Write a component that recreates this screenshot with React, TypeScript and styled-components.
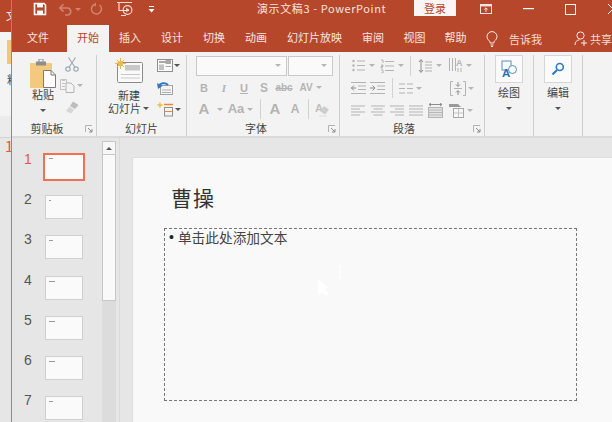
import React from 'react';
import styled, { createGlobalStyle } from 'styled-components';

const RED = '#b7472a';
const GRAY = '#b3b3b3';
const CJK = '"Noto Sans CJK SC", "Liberation Sans", sans-serif';

const Global = createGlobalStyle`
  html, body { margin: 0; padding: 0; width: 612px; height: 422px; overflow: hidden; }
  body { font-family: ${CJK}; background: #e6e6e6; }
`;

const Screen = styled.div`
  display: flex;
  width: 612px;
  height: 422px;
  overflow: hidden;
`;

/* the other window peeking out on the left */
const BackWindow = styled.div`
  flex: 0 0 11px;
  display: flex;
  flex-direction: column;
  overflow: hidden;
  border-right: 1px solid #8c8c8c;
  box-sizing: content-box;
`;
const BackTitle = styled.div`
  flex: 0 0 32px;
  background: ${RED};
  color: #fff;
  font-size: 11px;
  line-height: 30px;
  padding-left: 6px;
  white-space: nowrap;
`;
const BackRibbon = styled.div`
  flex: 0 0 84px;
  background: #f4f4f4;
  padding: 8px 0 0 7px;
  box-sizing: border-box;
  font-size: 11px;
  color: #444;
  white-space: nowrap;
`;
const BackPaste = styled.div`
  width: 10px;
  height: 24px;
  background: #f0c77c;
  margin-bottom: 7px;
`;
const BackThumbs = styled.div`
  flex: 0 0 22px;
  box-sizing: border-box;
  background: #ebebeb;
  border-bottom: 1px solid #d4d4d4;
`;
const BackBody = styled.div`
  flex: 1;
  background: #e6e6e6;
  color: #e8583c;
  font-size: 15px;
  line-height: 16px;
  padding-left: 5px;
`;

const Main = styled.div`
  flex: 1;
  min-width: 0;
  display: flex;
  flex-direction: column;
`;

const TitleBar = styled.div`
  flex: 0 0 25px;
  display: flex;
  align-items: flex-start;
  background: ${RED};
  color: #fff;
  overflow: hidden;
`;
const QatSlot = styled.span<{ $left: number; $w: number }>`
  flex: none;
  width: ${p => p.$w}px;
  margin-left: ${p => p.$left}px;
  height: 16px;
  margin-top: 1px;
  display: flex;
  align-items: center;
  justify-content: center;
`;
const DocTitle = styled.div`
  flex: none;
  margin-left: 102px;
  width: 130px;
  font-size: 11px;
  line-height: 16px;
  letter-spacing: 0.6px;
  white-space: nowrap;
  color: #f6e4de;
`;
const Login = styled.div`
  flex: none;
  margin-left: 27px;
  width: 42px;
  height: 16px;
  background: #fbf6f4;
  color: ${RED};
  font-size: 11px;
  line-height: 16px;
  text-align: center;
`;

const TabRow = styled.div`
  flex: 0 0 27px;
  display: flex;
  align-items: stretch;
  padding-left: 5px;
  background: ${RED};
`;
const Tab = styled.div<{ $w?: number; $active?: boolean }>`
  width: ${p => p.$w ?? 42}px;
  flex: none;
  margin-left: ${p => (p.$active ? 8 : 0)}px;
  text-align: center;
  font-size: 11px;
  line-height: 25px;
  color: ${p => (p.$active ? RED : '#f8e6e0')};
  background: ${p => (p.$active ? '#f3f3f3' : 'transparent')};
`;
const TellSlot = styled.div<{ $left: number; $gap: number }>`
  flex: none;
  margin-left: ${p => p.$left}px;
  display: flex;
  align-items: center;
  gap: ${p => p.$gap}px;
  font-size: 11px;
  color: #f3dcd5;
  white-space: nowrap;
`;

const Ribbon = styled.div`
  flex: 0 0 86px;
  min-height: 0;
  height: 86px;
  display: flex;
  background: #f3f3f3;
  border-bottom: 2px solid #dadada;
  box-sizing: border-box;
`;
const Group = styled.div<{ $w: number }>`
  flex: 0 0 ${p => p.$w}px;
  display: flex;
  flex-direction: column;
  position: relative;
  box-sizing: border-box;
  margin-top: 3px;
  border-right: 1px solid #cfcfcf;
`;
const GroupBody = styled.div`
  flex: 1;
  min-height: 0;
  display: flex;
`;
const GroupLabel = styled.div<{ $pull?: number }>`
  flex: 0 0 16px;
  padding-right: ${p => p.$pull ?? 0}px;
  font-size: 11px;
  line-height: 16px;
  text-align: center;
  color: #444;
`;
const Launcher = styled.svg`
  position: absolute;
  right: 3px;
  bottom: 3px;
`;
const Column = styled.div<{ $w: number; $left?: number; $top?: number; $gap?: number; $start?: boolean }>`
  width: ${p => p.$w}px;
  margin-left: ${p => p.$left ?? 0}px;
  padding-top: ${p => p.$top ?? 0}px;
  display: flex;
  flex-direction: column;
  align-items: ${p => (p.$start ? 'flex-start' : 'center')};
  gap: ${p => p.$gap ?? 0}px;
  font-size: 11px;
  line-height: 13px;
  color: #444;
`;
const ColLabel = styled.span<{ $top?: number }>`
  margin-top: ${p => p.$top ?? 0}px;
`;
const CaretLine = styled.span<{ $top?: number }>`
  margin-top: ${p => p.$top ?? 0}px;
  line-height: 6px;
`;
const IconRow = styled.div<{ $h?: number; $left?: number }>`
  height: ${p => p.$h ?? 22}px;
  padding-left: ${p => p.$left ?? 0}px;
  display: flex;
  align-items: center;
  white-space: nowrap;
`;
const Slot = styled.span<{ $w: number; $left?: number }>`
  flex: none;
  width: ${p => p.$w}px;
  margin-left: ${p => p.$left ?? 0}px;
  display: flex;
  align-items: center;
  justify-content: center;
`;
const Glyph = styled.span<{ $size?: number; $serif?: boolean; $italic?: boolean; $under?: boolean }>`
  font-family: ${p => (p.$serif ? '"Liberation Serif", serif' : '"Liberation Sans", sans-serif')};
  font-size: ${p => p.$size ?? 12}px;
  font-weight: 700;
  font-style: ${p => (p.$italic ? 'italic' : 'normal')};
  text-decoration: ${p => (p.$under ? 'underline' : 'none')};
  color: ${GRAY};
  line-height: 14px;
`;
const Caret = styled.span<{ $dark?: boolean; $color?: string; $up?: boolean }>`
  display: inline-block;
  flex: none;
  width: 0;
  height: 0;
  border-left: 3px solid transparent;
  border-right: 3px solid transparent;
  border-top: 3px solid ${p => p.$color ?? (p.$dark ? '#555' : '#b5b5b5')};
  transform: ${p => (p.$up ? 'rotate(180deg)' : 'none')};
`;
const VRule = styled.span<{ $left: number; $h?: number }>`
  flex: none;
  width: 1px;
  height: ${p => p.$h ?? 20}px;
  margin-left: ${p => p.$left}px;
  background: #d2d2d2;
`;
const Combo = styled.div<{ $w: number }>`
  flex: none;
  box-sizing: border-box;
  width: ${p => p.$w}px;
  height: 20px;
  margin-right: 1px;
  background: #fafafa;
  border: 1px solid #c9c9c9;
  display: flex;
  align-items: center;
  justify-content: flex-end;
  padding-right: 5px;
`;
const BigButton = styled.div`
  box-sizing: border-box;
  width: 28px;
  height: 28px;
  background: #fbfbfb;
  border: 1px solid #d6d6d6;
  display: flex;
  align-items: center;
  justify-content: center;
`;

const Body = styled.div`
  flex: 1;
  min-height: 0;
  display: flex;
  background: #e6e6e6;
`;
const ThumbPane = styled.div`
  flex: 0 0 90px;
  display: flex;
  flex-direction: column;
  padding-top: 15px;
  box-sizing: border-box;
`;
const ThumbRow = styled.div`
  flex: 0 0 40.2px;
  display: flex;
  align-items: flex-start;
`;
const ThumbNo = styled.div<{ $active?: boolean }>`
  width: 33px;
  text-align: left;
  padding-left: 12px;
  box-sizing: border-box;
  font-family: "Liberation Sans", sans-serif;
  font-size: 14px;
  line-height: 14px;
  margin-top: -1px;
  color: ${p => (p.$active ? '#e8583c' : '#555')};
`;
const Thumb = styled.div<{ $active?: boolean }>`
  box-sizing: border-box;
  width: ${p => (p.$active ? 42 : 38)}px;
  height: ${p => (p.$active ? 28 : 24)}px;
  margin: ${p => (p.$active ? '0 0 0 -2px' : '2px 0 0 0')};
  background: #fafafa;
  border: ${p => (p.$active ? '2px solid #f0704f' : '1px solid #cfcfcf')};
  padding: ${p => (p.$active ? '3px 0 0 4px' : '4px 0 0 3px')};
  display: flex;
  align-items: flex-start;
`;
const ThumbMark = styled.span<{ $w: number }>`
  width: ${p => p.$w}px;
  height: 1px;
  background: #9c9c9c;
`;
const ScrollBar = styled.div`
  flex: 0 0 14px;
  display: flex;
  flex-direction: column;
  margin-top: 3px;
  background: #dcdcdc;
`;
const ScrollUp = styled.div`
  flex: 0 0 14px;
  box-sizing: border-box;
  background: #f7f7f7;
  border: 1px solid #c6c6c6;
  display: flex;
  align-items: center;
  justify-content: center;
`;
const ScrollThumb = styled.div`
  flex: 0 0 146px;
  box-sizing: border-box;
  background: #f9f9f9;
  border: 1px solid #c6c6c6;
  border-top-width: 0;
`;
const Splitter = styled.div`
  flex: 0 0 4px;
  border-right: 1px solid #dadada;
  box-sizing: border-box;
`;
const Stage = styled.div`
  flex: 1;
  min-width: 0;
  padding: 19px 0 0 12px;
  display: flex;
`;
const Slide = styled.div`
  flex: 1;
  background: #f9f9f9;
  border-left: 1px solid #dedede;
  border-top: 1px solid #dedede;
  padding: 24px 35px 0 31px;
  display: flex;
  flex-direction: column;
`;
const SlideTitle = styled.div`
  padding-left: 7px;
  height: 46px;
  font-size: 21px;
  line-height: 30px;
  letter-spacing: 1px;
  color: #333;
`;
const Placeholder = styled.div`
  position: relative;
  box-sizing: border-box;
  height: 173px;
  border: 1px dashed #777;
  padding: 0 0 0 4px;
  display: flex;
  align-items: flex-start;
  gap: 4px;
  font-size: 13.7px;
  line-height: 16px;
  color: #444;
`;
const BulletMark = styled.span`
  font-family: "Liberation Sans", sans-serif;
  font-size: 14px;
  color: #222;
`;
const Cursor = styled.svg`
  position: absolute;
  left: 150px;
  top: 29px;
`;

/* ---- drawn icons ---- */
const Svg = ({ w, h, children }: { w: number; h: number; children: React.ReactNode }) => (
  <svg width={w} height={h} viewBox={`0 0 ${w} ${h}`} fill="none">{children}</svg>
);

const Lines = ({ rows, x = 0, w = 14, gap = 3, c = GRAY }: { rows: number; x?: number; w?: number; gap?: number; c?: string }) => (
  <>
    {Array.from({ length: rows }).map((_, i) => (
      <rect key={i} x={x} y={1 + i * gap} width={w} height="1" fill={c} />
    ))}
  </>
);

const SaveIcon = () => (
  <Svg w={14} h={14}>
    <path d="M1.500 1.500h9.500l1.500 1.500v9.500h-11z" stroke="#fff" strokeWidth="1.6" />
    <rect x="4" y="2" width="6" height="3.4" fill="#fff" />
    <rect x="4" y="8.500" width="6" height="3.500" fill="#fff" />
  </Svg>
);
const UndoIcon = () => (
  <Svg w={15} h={14}>
    <path d="M2 6h8a3.600 3.600 0 0 1 0 7H7M5.500 2.200 1.800 6l3.700 3.600" stroke="#cf8470" strokeWidth="1.6" />
  </Svg>
);
const RedoIcon = () => (
  <Svg w={13} h={14}>
    <path d="M9.500 3A5 5 0 1 1 4 2.600" stroke="#cf8470" strokeWidth="1.5" />
    <path d="M6 .5 3 2.800l3 1.600z" fill="#cf8470" />
  </Svg>
);
const PresentIcon = () => (
  <Svg w={17} h={16}>
    <path d="M0 1.500h15M2 1.500v8h10" stroke="#f4dcd5" strokeWidth="1.2" />
    <circle cx="10.500" cy="9" r="4.400" stroke="#f4dcd5" strokeWidth="1.1" />
    <path d="M9.200 6.800v4.400l3.200-2.200z" fill="#f4dcd5" />
    <path d="M4 14.500h5" stroke="#f4dcd5" />
  </Svg>
);
const QatMore = () => (
  <Svg w={7} h={8}>
    <rect x="1" y="1" width="5" height="1" fill="#fff" />
    <path d="M.5 4h6L3.500 7.500z" fill="#fff" />
  </Svg>
);
const WinBox = () => (
  <Svg w={12} h={10}>
    <rect x=".5" y=".5" width="11" height="9" stroke="#f6e4de" />
    <rect x="0" y="0" width="12" height="2.400" fill="#f6e4de" />
    <path d="M6 8V4M4.200 5.600 6 3.800l1.800 1.800" stroke="#f6e4de" />
  </Svg>
);
const Bulb = () => (
  <Svg w={12} h={16}>
    <path d="M3.600 10.200C2.400 9 1 7.800 1 5.600a5 5 0 0 1 10 0c0 2.200-1.400 3.400-2.600 4.600-.4.600-.5 1.200-.5 1.800H4.100c0-.6-.1-1.200-.5-1.800z" stroke="#fbeee9" />
    <path d="M4.500 14h3M5 15.500h2" stroke="#fbeee9" />
  </Svg>
);
const UserPlus = () => (
  <Svg w={14} h={15}>
    <circle cx="6.500" cy="4.500" r="3.600" stroke="#fbeee9" />
    <path d="M1 14c0-3 1.800-5 4.500-5.200" stroke="#fbeee9" />
    <path d="M7 12h6M10 9v6" stroke="#fbeee9" />
  </Svg>
);
const PasteIcon = () => (
  <Svg w={27} h={30}>
    <rect x="0" y="4" width="22" height="25" rx="1" fill="#f2c97f" />
    <rect x="6" y="2.500" width="10" height="4" fill="#8d8d8d" />
    <rect x="9" y="0" width="4" height="4" fill="none" stroke="#8d8d8d" />
    <path d="M13.500 11.500h7.500l4.500 4.500v12.500h-12z" fill="#fff" stroke="#7b7b7b" />
    <path d="M21 11.500v4.500h4.500" stroke="#7b7b7b" />
  </Svg>
);
const Scissors = () => (
  <Svg w={14} h={15}>
    <circle cx="3" cy="12" r="2.200" stroke="#9fabb3" strokeWidth="1.2" />
    <circle cx="11" cy="12" r="2.200" stroke="#9fabb3" strokeWidth="1.2" />
    <path d="M4.200 10 10.500.5M9.800 10 3.500.5" stroke="#9fabb3" strokeWidth="1.2" />
  </Svg>
);
const CopyIcon = () => (
  <Svg w={15} h={14}>
    <path d="M.5.5h6v10h-6z" stroke="#c4c4c4" />
    <path d="M6 4h5l3 3v6.500H6z" fill="#f3f3f3" stroke="#b3b3b3" />
    <Lines rows={3} x={2} w={3} c="#c4c4c4" />
  </Svg>
);
const Painter = () => (
  <Svg w={15} h={14}>
    <path d="M8 1.500 13.500 5 10 9 5 6z" fill="#bdbdbd" />
    <path d="M4.500 6.500 9 10l-3 3.500-5-2.500z" fill="#d6d6d6" />
  </Svg>
);
const NewSlideIcon = () => (
  <Svg w={29} h={25}>
    <rect x="2.500" y="4.500" width="25" height="20" rx="1" fill="#fafafa" stroke="#8a8a8a" />
    <rect x="10" y="7" width="15" height="5.500" fill="#c8c8c8" />
    <path d="M6 16.500h19M6 20h19" stroke="#c8c8c8" />
    <circle cx="5.500" cy="5.500" r="2.600" fill="#f0b94f" />
    <path d="M5.500 0v11M0 5.500h11M1.800 1.800l7.400 7.400M9.200 1.800 1.800 9.200" stroke="#f0b94f" />
  </Svg>
);
const LayoutIcon = () => (
  <Svg w={16} h={13}>
    <rect x=".5" y=".5" width="15" height="12" fill="#fafafa" stroke="#8f8f8f" />
    <rect x="2" y="2" width="12" height="2" fill="#a8a8a8" />
    <rect x="2" y="5.500" width="5" height="5.500" fill="#c2c2c2" />
    <Lines rows={3} x={8.500} w={5.500} c="#a8a8a8" />
  </Svg>
);
const ResetIcon = () => (
  <Svg w={16} h={14}>
    <rect x="3.500" y="4.500" width="12" height="9" fill="#f4f4f4" stroke="#a3a3a3" />
    <path d="M5 9h9M5 11.500h9" stroke="#b0b0b0" />
    <path d="M1.500 5.500C3 2 8 1 11 4" stroke="#2f78c4" strokeWidth="2" />
    <path d="M0 2l1 6 4.500-3z" fill="#2f78c4" />
  </Svg>
);
const SectionIcon = () => (
  <Svg w={17} h={15}>
    <circle cx="3" cy="3" r="1.500" fill="#f0b94f" />
    <path d="M3 0v6M0 3h6" stroke="#f0b94f" />
    <path d="M7 2.500h9" stroke="#e8863a" strokeWidth="1.5" />
    <rect x="7.500" y="5.500" width="8" height="8.500" stroke="#8f8f8f" />
    <path d="M7.500 9.500h8" stroke="#e8863a" />
  </Svg>
);
const Launch = () => (
  <Launcher width="8" height="8" viewBox="0 0 8 8" fill="none">
    <path d="M.5 7V.5H7" stroke="#b4b4b4" />
    <path d="M3 3l4 4M7 4v3H4" stroke="#8c8c8c" />
  </Launcher>
);
const Bullets = () => (
  <Svg w={13} h={13}>
    <path d="M5 2h8M5 6.500h8M5 11h8" stroke={GRAY} />
    <circle cx="1.500" cy="2" r="1.200" fill={GRAY} />
    <circle cx="1.500" cy="6.500" r="1.200" fill={GRAY} />
    <circle cx="1.500" cy="11" r="1.200" fill={GRAY} />
  </Svg>
);
const Numbers = () => (
  <Svg w={14} h={14}>
    <path d="M5 2.500h9M5 7h9M5 11.500h9" stroke={GRAY} />
    <path d="M1 1h2v3M1 6h2v1.500H1V9h2M1 11h2v3H1" stroke="#9a9a9a" strokeWidth=".7" />
  </Svg>
);
const LineSpace = () => (
  <Svg w={14} h={16}>
    <path d="M3 2v12M1 4l2-2.500L5 4M1 12l2 2.500L5 12" stroke="#8c8c8c" />
    <path d="M7 4h7M7 7h7M7 10h7M7 13h7" stroke={GRAY} />
  </Svg>
);
const TextDir = () => (
  <Svg w={15} h={15}>
    <path d="M1.500 0v13M4.500 0v13M7.500 0v13" stroke={GRAY} />
    <text x="8" y="8" fontSize="9" fontWeight="700" fill={GRAY} fontFamily="Liberation Sans">A</text>
    <path d="M10 10v4M13 10v4" stroke={GRAY} />
  </Svg>
);
const Indent = ({ rev }: { rev?: boolean }) => (
  <Svg w={15} h={12}>
    <path d="M0 .5h15M7 4h8M7 7.500h8M0 11.500h15" stroke={GRAY} />
    <path d={rev ? 'M0 6h5M3 3.500 .5 6 3 8.500' : 'M0 6h5M2.500 3.500 5 6 2.500 8.500'} stroke="#8c8c8c" />
  </Svg>
);
const Cols = () => (
  <Svg w={14} h={11}>
    <path d="M0 1h6M8 1h6M0 5.500h6M8 5.500h6M0 10h6M8 10h6" stroke={GRAY} />
  </Svg>
);
const AlignBox = () => (
  <Svg w={16} h={15}>
    <path d="M3 .5H.5v14H3M13 .5h2.500v14H13" stroke={GRAY} />
    <path d="M4 7.500h8" stroke={GRAY} />
    <path d="M8 1v4M6 3.500 8 5.500l2-2M8 14v-4M6 11.500l2-2 2 2" stroke="#8c8c8c" />
  </Svg>
);
const Align = ({ kind }: { kind: 'l' | 'c' | 'r' | 'j' }) => {
  const x = kind === 'c' ? 2.5 : kind === 'r' ? 5 : 0;
  const w = kind === 'j' ? 14 : 9;
  return (
    <Svg w={14} h={11}>
      <path d={`M0 1h14M${x} 4h${w}M0 7h14M${x} 10h${w}`} stroke={GRAY} />
    </Svg>
  );
};
const Justify = () => (
  <Svg w={15} h={15}>
    <rect x=".5" y="4.500" width="14" height="10" fill="#e2e2e2" stroke={GRAY} />
    <path d="M1 7h13M1 9.500h13M1 12h13" stroke="#b8b8b8" />
    <path d="M1 1.500h13M1 1.500 3 0M1 1.500 3 3M14 1.500 12 0M14 1.500 12 3" stroke="#8c8c8c" />
  </Svg>
);
const SmartArt = () => (
  <Svg w={15} h={15}>
    <path d="M0 1h9l3 3H0z" fill="#9a9a9a" />
    <rect x="4.500" y="5.500" width="10" height="9" fill="#f7f7f7" stroke="#a8a8a8" />
    <path d="M9.500 6v8M5 10h9" stroke="#c2c2c2" />
  </Svg>
);
const Eraser = () => (
  <Svg w={15} h={15}>
    <text x="0" y="10" fontSize="11" fontWeight="700" fill="#c0c0c0" fontFamily="Liberation Sans">A</text>
    <path d="M9 4l5 3.500-4 5L5 9z" fill="#cdcdcd" />
    <path d="M4 14h8" stroke="#dcdcdc" />
  </Svg>
);
const ShapesIcon = () => (
  <Svg w={18} h={18}>
    <rect x="2" y="1" width="9" height="9" stroke="#5b8fc4" />
    <circle cx="12.500" cy="9.500" r="4" fill="#fbfbfb" stroke="#5b8fc4" />
    <text x="2" y="17" fontSize="11.5" fontWeight="700" fill="#2f6db0" fontFamily="Liberation Sans">A</text>
  </Svg>
);
const SearchIcon = () => (
  <Svg w={14} h={14}>
    <circle cx="8.800" cy="5" r="3.500" stroke="#2f78c4" strokeWidth="1.6" />
    <path d="M6 8 1.500 12.500" stroke="#2f78c4" strokeWidth="2.2" />
  </Svg>
);

const tabs: [string, number?][] = [
  ['插入'], ['设计'], ['切换'], ['动画'], ['幻灯片放映', 75], ['审阅'], ['视图', 41], ['帮助', 41],
];
const slides = [
  { n: 1, mark: 4 }, { n: 2, mark: 2 }, { n: 3, mark: 4 }, { n: 4, mark: 6 },
  { n: 5, mark: 6 }, { n: 6, mark: 6 }, { n: 7, mark: 4 },
];

export default function App() {
  return (
    <Screen>
      <Global />
      <BackWindow>
        <BackTitle>文件</BackTitle>
        <BackRibbon>
          <BackPaste />
          粘贴
        </BackRibbon>
        <BackThumbs />
        <BackBody>1</BackBody>
      </BackWindow>
      <Main>
        <TitleBar>
          <QatSlot $left={21} $w={14}><SaveIcon /></QatSlot>
          <QatSlot $left={11} $w={15}><UndoIcon /></QatSlot>
          <QatSlot $left={2} $w={6}><Caret $color="#cf8470" /></QatSlot>
          <QatSlot $left={9} $w={13}><RedoIcon /></QatSlot>
          <QatSlot $left={14} $w={17}><PresentIcon /></QatSlot>
          <QatSlot $left={14} $w={7}><QatMore /></QatSlot>
          <DocTitle>演示文稿3 - PowerPoint</DocTitle>
          <Login>登录</Login>
          <QatSlot $left={24} $w={12}><WinBox /></QatSlot>
          <QatSlot $left={31} $w={11}>
            <Svg w={11} h={2}><rect width="11" height="1.2" fill="#fff" /></Svg>
          </QatSlot>
          <QatSlot $left={31} $w={11}>
            <Svg w={11} h={11}><rect x=".5" y=".5" width="10" height="10" stroke="#fff" /></Svg>
          </QatSlot>
          <QatSlot $left={32} $w={10}>
            <Svg w={10} h={10}><path d="M0 0l10 10M10 0 0 10" stroke="#fff" /></Svg>
          </QatSlot>
        </TitleBar>
        <TabRow>
          <Tab>文件</Tab>
          <Tab $active>开始</Tab>
          {tabs.map(([label, w]) => (
            <Tab key={label} $w={w}>{label}</Tab>
          ))}
          <TellSlot $left={10} $gap={11}>
            <Bulb />
            <span>告诉我</span>
          </TellSlot>
          <TellSlot $left={32} $gap={2}>
            <UserPlus />
            <span>共享</span>
          </TellSlot>
        </TabRow>
        <Ribbon>
          <Group $w={85}>
            <GroupBody>
              <Column $w={36} $left={13} $top={4}>
                <PasteIcon />
                <ColLabel $top={-1}>粘贴</ColLabel>
                <CaretLine $top={3}><Caret $dark /></CaretLine>
              </Column>
              <Column $w={22} $top={2} $gap={6}>
                <IconRow $h={15}><Scissors /></IconRow>
                <IconRow $h={15}><CopyIcon /><Slot $w={10}><Caret /></Slot></IconRow>
                <IconRow $h={15}><Painter /></IconRow>
              </Column>
            </GroupBody>
            <GroupLabel $pull={14}>剪贴板</GroupLabel>
            <Launch />
          </Group>
          <Group $w={90}>
            <GroupBody>
              <Column $w={50} $left={7} $top={3}>
                <NewSlideIcon />
                <ColLabel $top={6}>新建</ColLabel>
                <IconRow $h={13}>幻灯片<Slot $w={9}><Caret $dark /></Slot></IconRow>
              </Column>
              <Column $w={26} $left={2} $top={3} $gap={7}>
                <IconRow $h={15}><LayoutIcon /><Slot $w={9}><Caret $dark /></Slot></IconRow>
                <IconRow $h={15}><ResetIcon /><Slot $w={9} /></IconRow>
                <IconRow $h={15}><SectionIcon /><Slot $w={8}><Caret $dark /></Slot></IconRow>
              </Column>
            </GroupBody>
            <GroupLabel>幻灯片</GroupLabel>
          </Group>
          <Group $w={153}>
            <GroupBody>
              <Column $w={150} $start>
                <IconRow $h={22} $left={9}>
                  <Combo $w={91}><Caret /></Combo>
                  <Combo $w={45}><Caret /></Combo>
                </IconRow>
                <IconRow $h={22} $left={11}>
                  <Slot $w={12}><Glyph $size={11}>B</Glyph></Slot>
                  <Slot $w={12} $left={8}><Glyph $size={11} $serif $italic>I</Glyph></Slot>
                  <Slot $w={12} $left={8}><Glyph $size={11} $under>U</Glyph></Slot>
                  <Slot $w={12} $left={8}><Glyph $size={12}>S</Glyph></Slot>
                  <Slot $w={18} $left={5}><Glyph $size={10}><s>abc</s></Glyph></Slot>
                  <Slot $w={16} $left={5}><Glyph $size={10}>AV</Glyph></Slot>
                  <Slot $w={10}><Caret /></Slot>
                </IconRow>
                <IconRow $h={22} $left={11}>
                  <Slot $w={12}><Glyph $size={15}>A</Glyph></Slot>
                  <Slot $w={8} $left={6}><Caret /></Slot>
                  <Slot $w={18} $left={3}><Glyph $size={13}>Aa</Glyph></Slot>
                  <Slot $w={8} $left={1}><Caret /></Slot>
                  <VRule $left={6} />
                  <Slot $w={14} $left={7}><Glyph $size={15}>A</Glyph></Slot>
                  <Slot $w={12} $left={7}><Glyph $size={12}>A</Glyph></Slot>
                  <VRule $left={7} />
                  <Slot $w={15} $left={6}><Eraser /></Slot>
                </IconRow>
              </Column>
            </GroupBody>
            <GroupLabel $pull={14}>字体</GroupLabel>
            <Launch />
          </Group>
          <Group $w={145}>
            <GroupBody>
              <Column $w={144} $start>
                <IconRow $h={22} $left={12}>
                  <Slot $w={13}><Bullets /></Slot>
                  <Slot $w={8} $left={3}><Caret /></Slot>
                  <Slot $w={14} $left={4}><Numbers /></Slot>
                  <Slot $w={8} $left={3}><Caret /></Slot>
                  <VRule $left={5} />
                  <Slot $w={14} $left={7}><LineSpace /></Slot>
                  <Slot $w={8} $left={3}><Caret /></Slot>
                  <Slot $w={15} $left={5}><TextDir /></Slot>
                  <Slot $w={8} $left={2}><Caret /></Slot>
                </IconRow>
                <IconRow $h={24} $left={11}>
                  <Slot $w={15}><Indent rev /></Slot>
                  <Slot $w={15} $left={4}><Indent /></Slot>
                  <VRule $left={7} />
                  <Slot $w={14} $left={6}><Cols /></Slot>
                  <Slot $w={8} $left={2}><Caret /></Slot>
                  <Slot $w={16} $left={27}><AlignBox /></Slot>
                  <Slot $w={8} $left={1}><Caret /></Slot>
                </IconRow>
                <IconRow $h={20} $left={11}>
                  <Slot $w={14}><Align kind="l" /></Slot>
                  <Slot $w={14} $left={6}><Align kind="c" /></Slot>
                  <Slot $w={14} $left={5}><Align kind="r" /></Slot>
                  <Slot $w={14} $left={5}><Align kind="j" /></Slot>
                  <Slot $w={15} $left={5}><Justify /></Slot>
                  <Slot $w={15} $left={6}><SmartArt /></Slot>
                  <Slot $w={8} $left={2}><Caret /></Slot>
                </IconRow>
              </Column>
            </GroupBody>
            <GroupLabel $pull={16}>段落</GroupLabel>
            <Launch />
          </Group>
          <Group $w={49}>
            <GroupBody>
              <Column $w={48} $gap={3}>
                <BigButton><ShapesIcon /></BigButton>
                <span>绘图</span>
                <CaretLine><Caret $dark /></CaretLine>
              </Column>
            </GroupBody>
          </Group>
          <Group $w={49}>
            <GroupBody>
              <Column $w={48} $gap={3}>
                <BigButton><SearchIcon /></BigButton>
                <span>编辑</span>
                <CaretLine><Caret $dark /></CaretLine>
              </Column>
            </GroupBody>
          </Group>
        </Ribbon>
        <Body>
          <ThumbPane>
            {slides.map(({ n, mark }) => (
              <ThumbRow key={n}>
                <ThumbNo $active={n === 1}>{n}</ThumbNo>
                <Thumb $active={n === 1}><ThumbMark $w={mark} /></Thumb>
              </ThumbRow>
            ))}
          </ThumbPane>
          <ScrollBar>
            <ScrollUp><Caret $dark $up /></ScrollUp>
            <ScrollThumb />
          </ScrollBar>
          <Splitter />
          <Stage>
            <Slide>
              <SlideTitle>曹操</SlideTitle>
              <Placeholder>
                <BulletMark>•</BulletMark>
                <span>单击此处添加文本</span>
                <Cursor width="30" height="45" viewBox="0 0 30 45" fill="none">
                  <path d="M25 8v12M23 8h4M23 20h4" stroke="#fff" />
                  <path d="M3 22 3 38 7 34 12 38 13 35 9 31 14 30z" fill="#fff" />
                </Cursor>
              </Placeholder>
            </Slide>
          </Stage>
        </Body>
      </Main>
    </Screen>
  );
}
